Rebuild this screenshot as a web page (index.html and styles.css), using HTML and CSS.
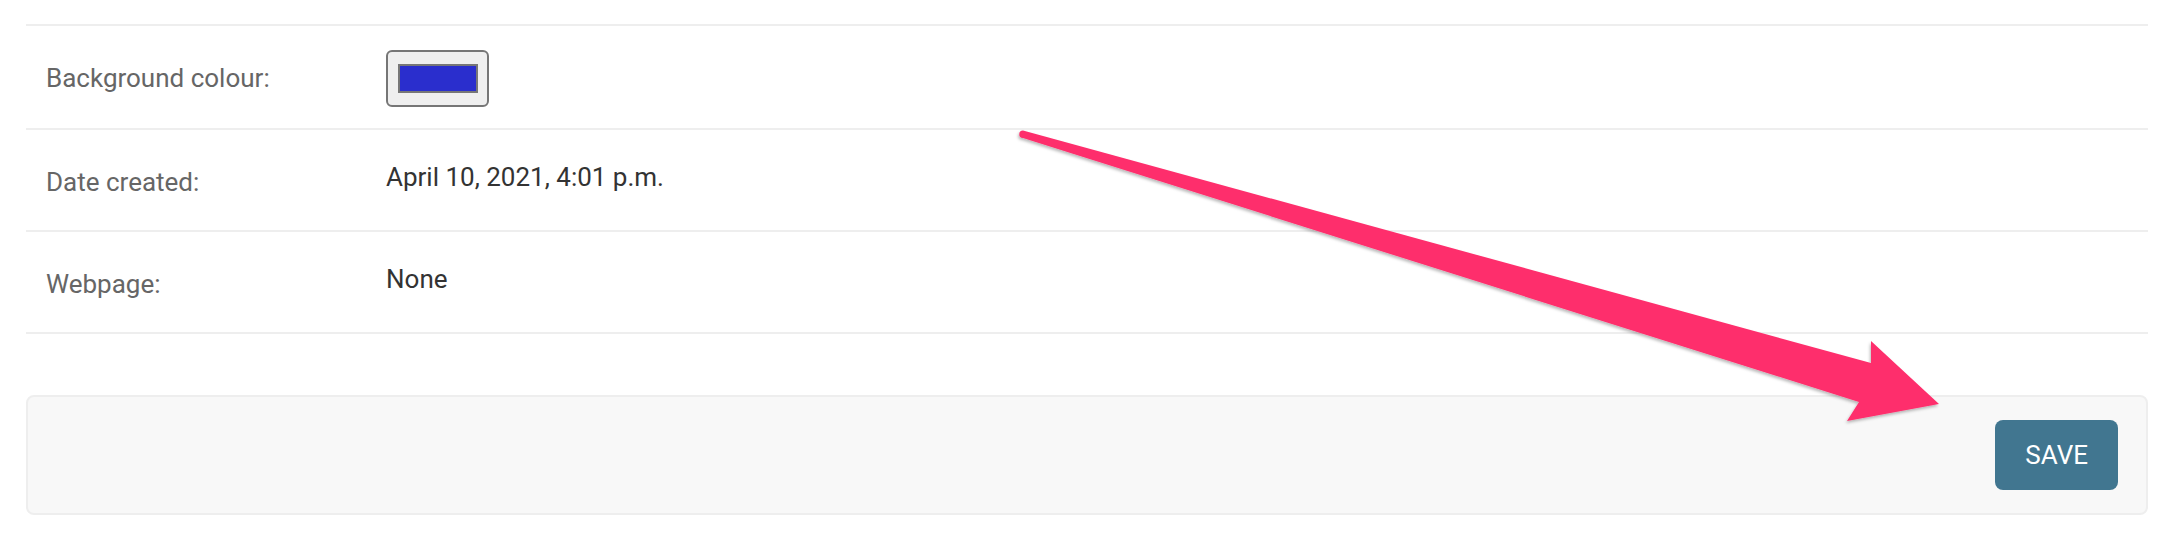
FILE: index.html
```html
<!DOCTYPE html>
<html lang="en">
<head>
<meta charset="utf-8">
<title>Change form</title>
<link rel="stylesheet" href="styles.css">
</head>
<body>
<div class="page">
  <div class="fieldset">
    <div class="form-row first">
      <label class="label">Background colour:</label>
      <div class="field">
        <span class="color-input"><span class="swatch"></span></span>
      </div>
    </div>
    <div class="form-row">
      <label class="label">Date created:</label>
      <div class="readonly">April 10, 2021, 4:01 p.m.</div>
    </div>
    <div class="form-row">
      <label class="label">Webpage:</label>
      <div class="readonly">None</div>
    </div>
  </div>
  <div class="submit-row">
    <button class="save" type="button">SAVE</button>
  </div>
</div>
<svg class="annotation" width="2166" height="544" viewBox="0 0 2166 544" xmlns="http://www.w3.org/2000/svg">
  <defs>
    <filter id="sh" x="-5%" y="-20%" width="110%" height="140%">
      <feDropShadow dx="-1" dy="2" stdDeviation="1.5" flood-color="#000" flood-opacity="0.28"/>
    </filter>
  </defs>
  <path filter="url(#sh)" fill="#fe2e6c" d="M1023,130.5 L1871,363 L1871,341 L1939,404 L1847,421 L1859,402 L1023,138 A3.75,3.75 0 0 1 1023,130.5 Z"/>
</svg>
</body>
</html>
```

FILE: styles.css
```css
html, body {
  margin: 0;
  padding: 0;
  background: #fff;
}

body {
  position: relative;
  width: 2166px;
  height: 544px;
  overflow: hidden;
  font-family: Roboto, "Liberation Sans", Arial, sans-serif;
  font-size: 26px;
}

.page {
  padding: 24px 0 0 26px;
  width: 2122px;
}

.fieldset {
  border-top: 2px solid #eeeeee;
}

.form-row {
  display: flex;
  align-items: flex-start;
  height: 100px;
  border-bottom: 2px solid #eeeeee;
}

.form-row.first {
  height: 102px;
}

.label {
  box-sizing: border-box;
  width: 360px;
  flex: none;
  padding: 39px 20px 0 20px;
  line-height: 26px;
  color: #666666;
}

.readonly {
  padding-top: 34px;
  line-height: 26px;
  color: #333333;
}

.field {
  padding-top: 24px;
}

.color-input {
  box-sizing: border-box;
  display: flex;
  align-items: center;
  justify-content: center;
  width: 103px;
  height: 57px;
  border: 2px solid #767676;
  border-radius: 6px;
  background: #efefef;
}

.swatch {
  box-sizing: border-box;
  display: block;
  width: 80px;
  height: 29px;
  border: 2px solid #777777;
  background: #2a2ecd;
}

.submit-row {
  box-sizing: border-box;
  margin-top: 61px;
  height: 120px;
  padding: 23px 28px;
  border: 2px solid #eeeeee;
  border-radius: 8px;
  background: #f8f8f8;
  display: flex;
  justify-content: flex-end;
}

.save {
  height: 70px;
  padding: 0 30px;
  border: none;
  border-radius: 8px;
  background: #417690;
  color: #ffffff;
  font-family: Roboto, "Liberation Sans", Arial, sans-serif;
  font-size: 26px;
  line-height: 70px;
}

.annotation {
  position: absolute;
  top: 0;
  left: 0;
  pointer-events: none;
}
```
